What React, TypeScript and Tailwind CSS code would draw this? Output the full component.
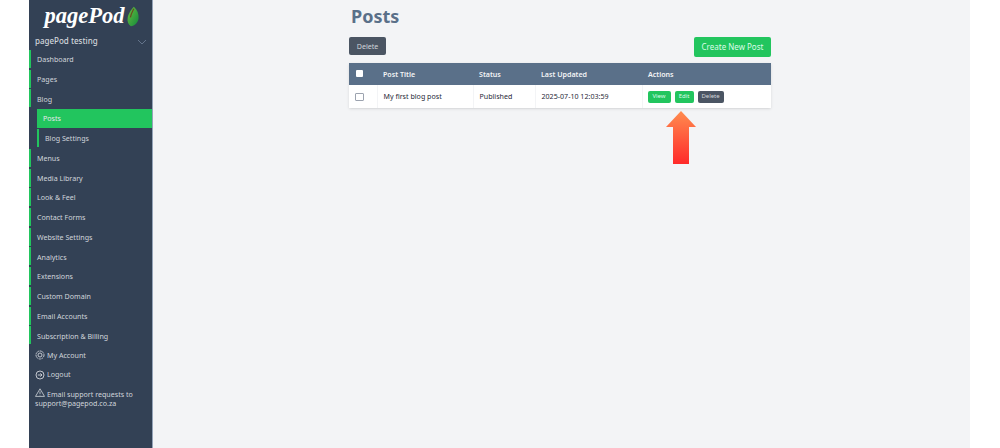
const items = ["Dashboard", "Pages", "Blog"]
const items2 = ["Menus", "Media Library", "Look & Feel", "Contact Forms", "Website Settings", "Analytics", "Extensions", "Custom Domain", "Email Accounts", "Subscription & Billing"]

function NavItem({ label }: { label: string }) {
    return <div className="h-[18px] mb-[1.72px] border-l-[2px] border-[#22c55e] pl-[6px] pt-[1px] flex items-center text-[7.1px] text-[#d1d5db]">{label}</div>
}

function Leaf() {
    return <svg width="12" height="23" viewBox="0 0 14 24" className="ml-[3px] mt-[5px]">
        <defs>
            <linearGradient id="leaf" x1="0" y1="0" x2="1" y2="1">
                <stop offset="0" stopColor="#6bbf3f" />
                <stop offset="1" stopColor="#128a3c" />
            </linearGradient>
        </defs>
        <path d="M8 0.5C12 4 14 9 13.5 14C13 19 9 23 4.5 23.5C1.5 21.5 0 18 0.8 13.5C1.5 8.5 5 3.5 8 0.5Z" fill="url(#leaf)" />
        <path d="M8 3C6 7 4.5 9 4 13" stroke="#6b4a1e" strokeWidth="1.4" fill="none" />
    </svg>
}

export default function App() {
    return <div className="h-[448px] w-[1000px] overflow-hidden bg-white flex font-['Noto_Sans',sans-serif]">
        <div className="w-[29px]" />
        <aside className="w-[124px] bg-[#334155] border-r border-[#94a3b8]">
            <div className="h-[31px] flex justify-center pl-[3px]">
                <span className="text-[22.5px] leading-[30px] pt-[1px] font-bold italic text-white font-['Liberation_Serif',serif]">pagePod</span>
                <Leaf />
            </div>
            <div className="h-[19px] pl-[6px] pr-[5px] flex items-center justify-between text-[8px] font-medium text-[#d1d5db]">
                <span>pagePod testing</span>
                <svg width="10" height="6" viewBox="0 0 10 6" className="mt-[3px]"><path d="M1 1l4 4 4-4" stroke="#64748b" strokeWidth="1" fill="none" /></svg>
            </div>
            {items.map(i => <NavItem key={i} label={i} />)}
            <div className="ml-[8px]">
                <div className="h-[19px] mb-[1px] bg-[#22c55e] pl-[6px] flex items-center text-[7.1px] text-[#e5e7eb]">Posts</div>
                <div className="h-[18px] mb-[1.72px] border-l-[2px] border-[#22c55e] pl-[6px] flex items-center text-[7.1px] text-[#d1d5db]">Blog Settings</div>
            </div>
            {items2.map(i => <NavItem key={i} label={i} />)}
            <div className="h-[18px] mb-[1.72px] pl-[6px] flex items-center gap-[2px] text-[7.1px] text-[#d1d5db]">
                <svg width="10" height="10" viewBox="0 0 10 10" fill="none" stroke="#d1d5db" strokeWidth="0.9"><circle cx="5" cy="5" r="4" strokeDasharray="2 0.6" /><circle cx="5" cy="5" r="2" /></svg>
                <span>My Account</span>
            </div>
            <div className="h-[18px] mb-[1.72px] pl-[6px] flex items-center gap-[2px] text-[7.1px] text-[#d1d5db]">
                <svg width="10" height="10" viewBox="0 0 10 10" fill="none" stroke="#d1d5db" strokeWidth="0.9"><circle cx="5" cy="5" r="4" /><path d="M2.8 5h4.2M5.4 3.4L7 5 5.4 6.6" /></svg>
                <span>Logout</span>
            </div>
            <div className="pl-[6px] pr-[4px] pt-[2px] text-[7.1px] leading-[10px] text-[#d1d5db]">
                <svg width="10" height="9" viewBox="0 0 10 9" fill="none" stroke="#d1d5db" strokeWidth="0.8" className="inline mr-[2px] align-[-0.5px]"><path d="M5 0.8L9.5 8.4H0.5Z" /><path d="M5 3.4v2.6M5 6.8v0.6" /></svg>
                Email support requests to support@pagepod.co.za
            </div>
        </aside>
        <main className="w-[817px] bg-[#f3f4f6] pl-[196px] relative">
            <h1 className="text-[18px] leading-[24px] pt-[4px] pl-[2px] h-[37px] font-bold text-[#5a7089]">Posts</h1>
            <div className="w-[422px] h-[26px] flex justify-between items-start">
                <button className="w-[37px] h-[18px] bg-[#4b5563] rounded-[2px] text-[7.1px] text-[#d1d5db]">Delete</button>
                <button className="w-[77px] h-[20px] bg-[#22c55e] rounded-[2px] text-[8px] text-[#dcfce7]">Create New Post</button>
            </div>
            <table className="w-[422px] table-fixed border-collapse text-[7.1px] bg-white shadow-sm">
                <thead>
                    <tr className="h-[22px] bg-[#5a7089] text-[#f3f4f6] text-left font-semibold">
                        <th className="w-[28px] pl-[7px] pb-[2px]"><span className="block w-[7px] h-[7px] bg-white rounded-[1px]" /></th>
                        <th className="w-[96px] pl-[6px] pt-[1px] font-semibold">Post Title</th>
                        <th className="w-[62px] pl-[6px] pt-[1px] font-semibold">Status</th>
                        <th className="w-[107px] pl-[6px] pt-[1px] font-semibold">Last Updated</th>
                        <th className="pl-[6px] pt-[1px] font-semibold">Actions</th>
                    </tr>
                </thead>
                <tbody>
                    <tr className="h-[23px] text-[#1f2937]">
                        <td className="pl-[6px] border-r border-[#f3f4f6]"><span className="block w-[9px] h-[8px] border border-[#9ca3af] rounded-[1px]" /></td>
                        <td className="pl-[6px] border-r border-[#f3f4f6]">My first blog post</td>
                        <td className="pl-[6px] border-r border-[#f3f4f6]">Published</td>
                        <td className="pl-[6px] border-r border-[#f3f4f6]">2025-07-10 12:03:59</td>
                        <td className="pl-[5px]">
                            <div className="flex gap-[4px]">
                                <span className="w-[23px] h-[12px] flex items-center justify-center bg-[#22c55e] rounded-[2px] text-[6px] text-[#dcfce7]">View</span>
                                <span className="w-[19px] h-[12px] flex items-center justify-center bg-[#22c55e] rounded-[2px] text-[6px] text-[#dcfce7]">Edit</span>
                                <span className="w-[26px] h-[12px] flex items-center justify-center bg-[#4b5563] rounded-[2px] text-[6px] text-[#d1d5db]">Delete</span>
                            </div>
                        </td>
                    </tr>
                </tbody>
            </table>
            <svg width="32" height="54" viewBox="0 0 32 54" className="absolute left-[512px] top-[111px]">
                <defs>
                    <linearGradient id="arrow" x1="0" y1="0" x2="0" y2="1">
                        <stop offset="0" stopColor="#ff8c4f" />
                        <stop offset="1" stopColor="#ff2a2a" />
                    </linearGradient>
                </defs>
                <path d="M16 0L31 16H24V53H8V16H1Z" fill="url(#arrow)" />
            </svg>
        </main>
        <div className="w-[30px]" />
    </div>
}
